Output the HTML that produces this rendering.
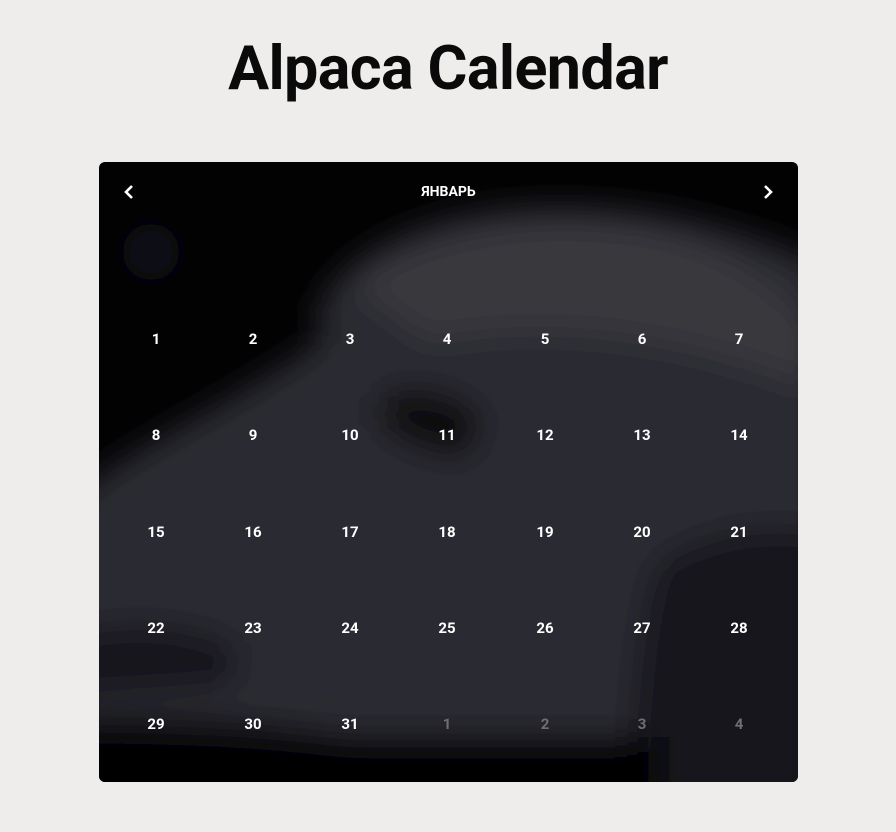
<!DOCTYPE html>
<html><head><meta charset="utf-8"><style>
html,body{margin:0;padding:0;background:#eeedeb;width:896px;height:832px;overflow:hidden;font-family:"Roboto","Liberation Sans",sans-serif}
h1{position:absolute;left:0;right:0;top:30px;margin:0;text-align:center;font-size:61px;font-weight:bold;color:#0a0a0a;letter-spacing:-0.6px;line-height:76px}
.card{position:absolute;left:99px;top:162px;width:699px;height:620px;border-radius:6px;background:#020203;overflow:hidden}
.card svg.bg{position:absolute;left:0;top:0}
.hd{position:absolute;top:20px;left:0;right:0;text-align:center;color:#fff;font-size:14px;font-weight:bold;line-height:20px}
.arr{position:absolute;top:22px}
.d{position:absolute;width:60px;margin-left:-30px;text-align:center;color:#fff;font-size:15px;font-weight:bold;line-height:18px}
.d.o{color:#6f6f72}
</style></head><body>
<h1>Alpaca Calendar</h1>
<div class="card">
<svg class="bg" width="699" height="620" viewBox="0 0 699 620">
<defs><filter id="b" filterUnits="userSpaceOnUse" x="-100" y="-100" width="900" height="820"><feGaussianBlur stdDeviation="16"/></filter>
<filter id="b2" filterUnits="userSpaceOnUse" x="-100" y="-100" width="900" height="820"><feGaussianBlur stdDeviation="9"/></filter></defs>
<circle cx="52" cy="90" r="28" fill="#111114" filter="url(#b2)"/>
<g filter="url(#b)">
<path d="M220 140 C260 80 340 50 430 45 C530 40 630 60 720 100 L720 700 L520 700 C440 600 300 560 -30 560 L-30 340 C20 290 100 260 220 180 Z" fill="#2b2b30"/>
<path d="M250 120 C320 70 450 45 560 70 C630 85 690 130 720 170 L720 230 C630 190 480 150 330 180 Z" fill="#38383e"/>
<path d="M280 235 C305 220 355 225 385 255 L370 295 C330 295 300 280 280 262 Z" fill="#0c0c0e"/>
<path d="M560 400 C610 370 660 360 720 370 L720 700 L530 700 C530 560 540 450 560 400 Z" fill="#18181b"/>
<path d="M-20 470 C40 455 100 465 140 485 L130 525 L-20 535 Z" fill="#17171a"/>
<path d="M-30 575 L560 575 L560 700 L-30 700 Z" fill="#050506"/>
</g>
</svg>
<svg class="arr" style="left:24px" width="12" height="16" viewBox="0 0 12 16"><path d="M9 2 L3 8 L9 14" stroke="#fff" stroke-width="2.6" fill="none"/></svg>
<svg class="arr" style="left:663px" width="12" height="16" viewBox="0 0 12 16"><path d="M3 2 L9 8 L3 14" stroke="#fff" stroke-width="2.6" fill="none"/></svg>
<div class="hd">ЯНВАРЬ</div>
<div class="d" style="left:57px;top:168px">1</div><div class="d" style="left:154px;top:168px">2</div><div class="d" style="left:251px;top:168px">3</div><div class="d" style="left:348px;top:168px">4</div><div class="d" style="left:446px;top:168px">5</div><div class="d" style="left:543px;top:168px">6</div><div class="d" style="left:640px;top:168px">7</div>
<div class="d" style="left:57px;top:264px">8</div><div class="d" style="left:154px;top:264px">9</div><div class="d" style="left:251px;top:264px">10</div><div class="d" style="left:348px;top:264px">11</div><div class="d" style="left:446px;top:264px">12</div><div class="d" style="left:543px;top:264px">13</div><div class="d" style="left:640px;top:264px">14</div>
<div class="d" style="left:57px;top:361px">15</div><div class="d" style="left:154px;top:361px">16</div><div class="d" style="left:251px;top:361px">17</div><div class="d" style="left:348px;top:361px">18</div><div class="d" style="left:446px;top:361px">19</div><div class="d" style="left:543px;top:361px">20</div><div class="d" style="left:640px;top:361px">21</div>
<div class="d" style="left:57px;top:457px">22</div><div class="d" style="left:154px;top:457px">23</div><div class="d" style="left:251px;top:457px">24</div><div class="d" style="left:348px;top:457px">25</div><div class="d" style="left:446px;top:457px">26</div><div class="d" style="left:543px;top:457px">27</div><div class="d" style="left:640px;top:457px">28</div>
<div class="d" style="left:57px;top:553px">29</div><div class="d" style="left:154px;top:553px">30</div><div class="d" style="left:251px;top:553px">31</div><div class="d o" style="left:348px;top:553px">1</div><div class="d o" style="left:446px;top:553px">2</div><div class="d o" style="left:543px;top:553px">3</div><div class="d o" style="left:640px;top:553px">4</div>
</div>
</body></html>
